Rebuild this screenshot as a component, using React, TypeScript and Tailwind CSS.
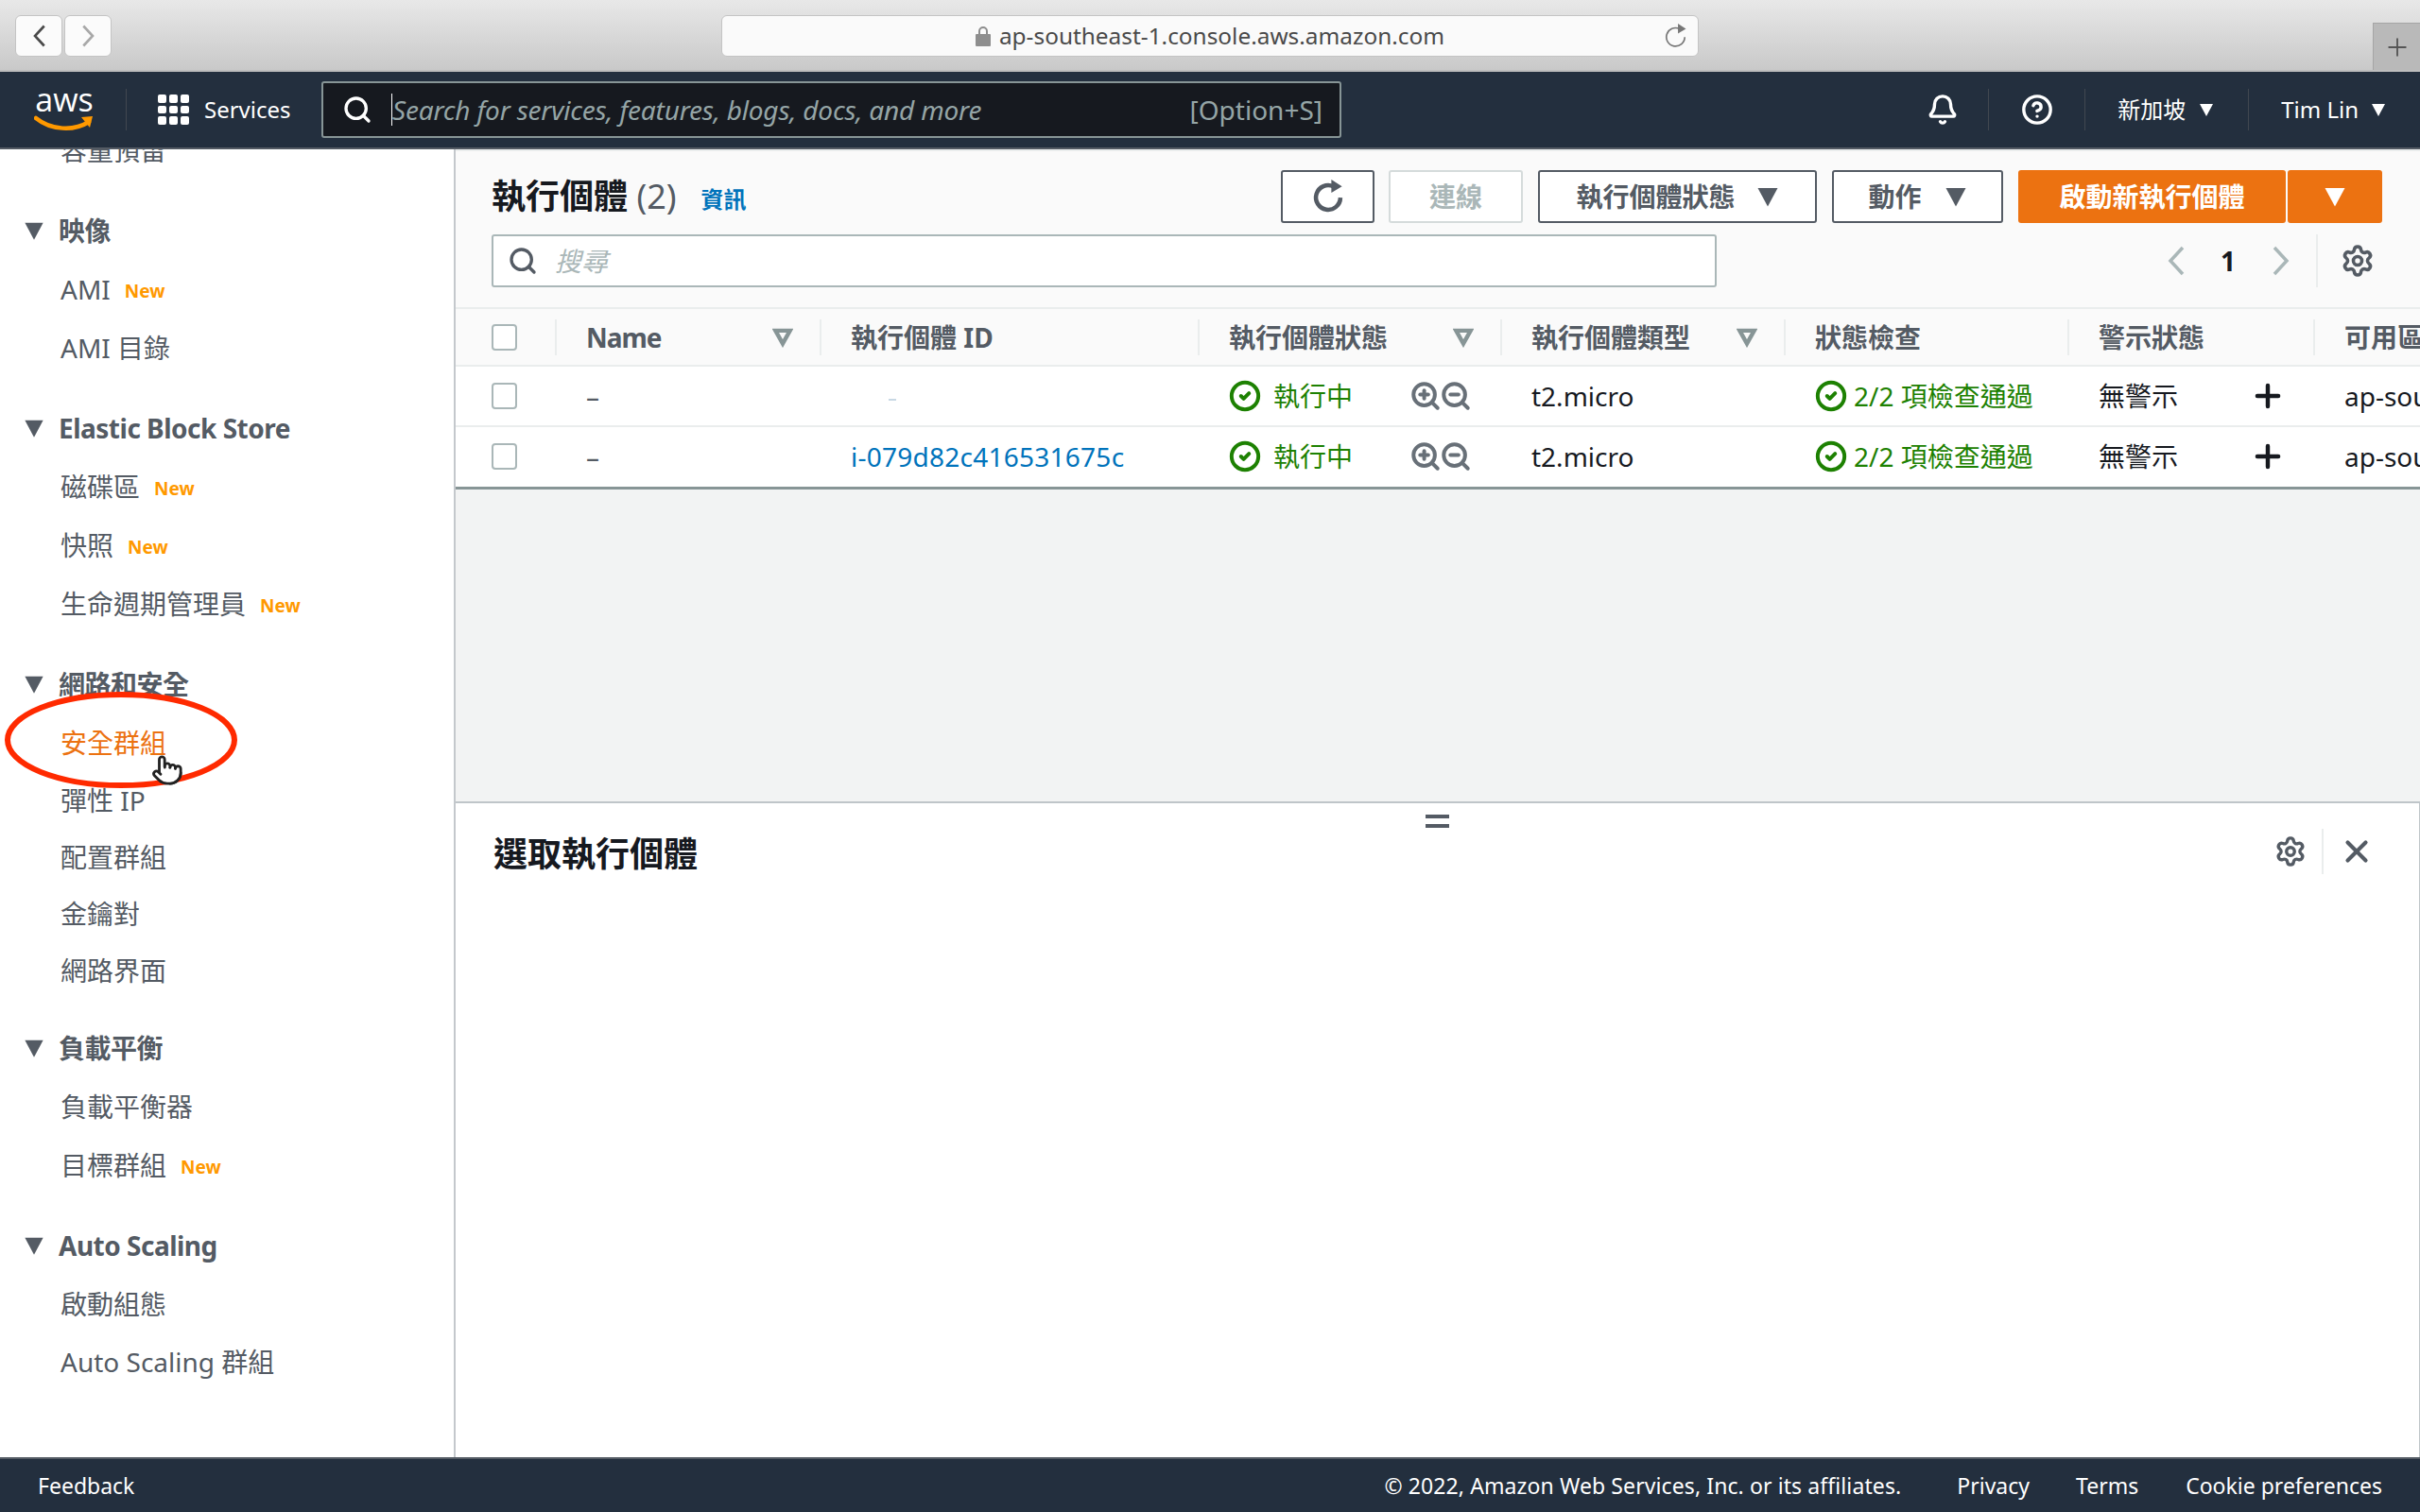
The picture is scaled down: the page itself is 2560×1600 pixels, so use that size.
import { Bell, CircleCheck, CircleHelp, Pointer, Plus, Search, Settings, X, ZoomIn, ZoomOut } from "lucide-react";

type NavGroup = {
  title: string;
  spacing: string;
  items: { label: string; isNew?: boolean; active?: boolean; short?: boolean }[];
};

const navGroups: NavGroup[] = [
  {
    title: "映像",
    spacing: "mt-[23px]",
    items: [{ label: "AMI", isNew: true }, { label: "AMI 目錄" }],
  },
  {
    title: "Elastic Block Store",
    spacing: "mt-[23px]",
    items: [
      { label: "磁碟區", isNew: true },
      { label: "快照", isNew: true },
      { label: "生命週期管理員", isNew: true },
    ],
  },
  {
    title: "網路和安全",
    spacing: "mt-[23px]",
    items: [
      { label: "安全群組", active: true },
      { label: "彈性 IP", short: true },
      { label: "配置群組", short: true },
      { label: "金鑰對", short: true },
      { label: "網路界面", short: true },
    ],
  },
  {
    title: "負載平衡",
    spacing: "mt-[21px]",
    items: [{ label: "負載平衡器" }, { label: "目標群組", isNew: true }],
  },
  {
    title: "Auto Scaling",
    spacing: "mt-[23px]",
    items: [{ label: "啟動組態" }, { label: "Auto Scaling 群組", short: true }],
  },
];

const instances = [
  { id: "" },
  { id: "i-079d82c416531675c" },
];

function Caret({ className }: { className: string }) {
  return (
    <svg viewBox="0 0 16 16" className={className} fill="currentColor">
      <path d="M1 2h14L8 15z" />
    </svg>
  );
}

function FilterCaret() {
  return (
    <svg viewBox="0 0 20 20" className="h-[22px] w-[22px] shrink-0 text-[#879596]" fill="none" stroke="currentColor" strokeWidth="4">
      <path d="M3 3.5h14L10 16z" />
    </svg>
  );
}

// tall thin chevron, the lucide ones are too wide here
function Chevron({ dir, className }: { dir: "left" | "right"; className: string }) {
  return (
    <svg viewBox="0 0 20 32" className={className} fill="none" stroke="currentColor" strokeWidth="3.5">
      <path d={dir === "left" ? "M17 2 4 16l13 14" : "M3 2l13 14L3 30"} />
    </svg>
  );
}

// open ring with a solid arrow head at the top right
function Reload({ className, strokeWidth }: { className: string; strokeWidth: number }) {
  return (
    <svg viewBox="0 0 32 32" className={className} fill="none">
      <path d="M21 6.5A11.5 11.5 0 1 0 27.5 17" stroke="currentColor" strokeWidth={strokeWidth} />
      <path d="M19 0l10 6.5-10 6z" fill="currentColor" />
    </svg>
  );
}

function OutlineButton({ children, className }: { children: React.ReactNode; className: string }) {
  return (
    <div className={`flex h-[56px] shrink-0 items-center justify-center rounded-[3px] border-2 border-[#545b64] bg-white font-bold text-[#545b64] ${className}`}>
      {children}
    </div>
  );
}

function HeaderCell({ label, filter, className }: { label: string; filter?: boolean; className: string }) {
  return (
    <div className={`flex h-[38px] shrink-0 items-center border-l-2 border-[#eaeded] ${className}`}>
      <span className="whitespace-nowrap">{label}</span>
      {filter && <span className="ml-auto pr-[28px]"><FilterCaret /></span>}
    </div>
  );
}

export default function App() {
  return (
    <div className="relative flex h-[1600px] w-[2560px] flex-col overflow-hidden bg-white font-['Noto_Sans','Noto_Sans_CJK_TC',sans-serif] text-[28px] text-[#16191f]">
      {/* browser chrome */}
      <div className="relative flex h-[76px] shrink-0 items-start border-b-2 border-[#bdbdbd] bg-gradient-to-b from-[#e8e8e8] to-[#c9c9c9] pl-[16px] pt-[16px]">
        <div className="flex h-[44px] w-[50px] items-center justify-center rounded-[6px] border border-[#c4c4c4] bg-[#fbfbfb] text-[#4a4a4a]">
          <Chevron dir="left" className="h-[24px] w-[15px]" />
        </div>
        <div className="ml-[2px] flex h-[44px] w-[50px] items-center justify-center rounded-[6px] border border-[#c4c4c4] bg-[#fbfbfb] text-[#a8a8a8]">
          <Chevron dir="right" className="h-[24px] w-[15px]" />
        </div>
        <div className="relative ml-[645px] flex h-[44px] w-[1034px] items-center justify-center rounded-[6px] border border-[#c4c4c4] bg-[#fafafa] text-[24.4px] text-[#4a4a4a]">
          <svg viewBox="0 0 16 22" className="mr-[9px] h-[22px] w-[16px] text-[#8e8e8e]" fill="currentColor">
            <path d="M3 9V6a5 5 0 0 1 10 0v3h-2V6a3 3 0 0 0-6 0v3z" />
            <rect y="9" width="16" height="13" rx="1" />
          </svg>
          <span>ap-southeast-1.console.aws.amazon.com</span>
          <Reload strokeWidth={2} className="absolute right-[10px] top-[8px] h-[27px] w-[27px] text-[#777]" />
        </div>
        <div className="absolute bottom-0 right-0 flex h-[50px] w-[50px] items-center justify-center border-l border-t border-[#a5a5a5] bg-[#b9b9b9] text-[#555]">
          <Plus size={30} strokeWidth={1.5} />
        </div>
      </div>

      {/* console nav */}
      <div className="flex h-[82px] shrink-0 items-center border-b-2 border-[#545b64] bg-[#232f3e] text-white">
        <div className="ml-[36px] flex h-[60px] w-[64px] flex-col items-center justify-center">
          <span className="h-[32px] font-['Open_Sans',sans-serif] text-[34px] leading-[30px]">aws</span>
          <svg viewBox="0 0 64 20" className="h-[20px] w-[64px]" fill="none">
            <path d="M2 3c16 13 40 14 56 4" stroke="#ff9900" strokeWidth="4.5" strokeLinecap="round" />
            <path d="M50 2l12-1-3 12z" fill="#ff9900" />
          </svg>
        </div>
        <div className="ml-[33px] h-[44px] w-px bg-[#414750]" />
        <div className="ml-[33px] grid h-[32px] w-[33px] grid-cols-3 gap-[3px]">
          {Array.from({ length: 9 }).map((_, i) => (
            <span key={i} className="rounded-[2px] bg-white" />
          ))}
        </div>
        <span className="ml-[16px] w-[90px] text-[24px]">Services</span>
        <div className="ml-[34px] flex h-[60px] w-[1079px] items-center rounded-[3px] border-2 border-[#879596] bg-[#16191f] pr-[18px] text-[#95a5a6]">
          <Search size={32} strokeWidth={2.5} className="ml-[20px] text-white" />
          <span className="ml-[20px] h-[34px] w-px bg-white" />
          <span className="whitespace-nowrap italic tracking-[-0.2px]">Search for services, features, blogs, docs, and more</span>
          <span className="ml-auto whitespace-nowrap">[Option+S]</span>
        </div>
        <div className="ml-auto flex items-center text-[24px]">
          <Bell size={34} strokeWidth={2.4} />
          <span className="ml-[31px] h-[44px] w-px bg-[#414750]" />
          <CircleHelp size={34} strokeWidth={2.4} className="ml-[34px]" />
          <span className="ml-[33px] h-[44px] w-px bg-[#414750]" />
          <span className="ml-[34px]">新加坡</span>
          <Caret className="ml-[14px] h-[16px] w-[16px]" />
          <span className="ml-[36px] h-[44px] w-px bg-[#414750]" />
          <span className="ml-[34px]">Tim Lin</span>
          <Caret className="ml-[13px] mr-[36px] h-[16px] w-[16px]" />
        </div>
      </div>

      <div className="flex min-h-0 flex-1">
        {/* sidebar */}
        <aside className="w-[482px] shrink-0 overflow-hidden border-r-2 border-[#c4c8cc] bg-white text-[#545b64]">
          <div className="-mt-[30px]">
            <div className="flex h-[62px] items-center pl-[64px]">容量預留</div>
            {navGroups.map((group) => (
              <div key={group.title} className={group.spacing}>
                <div className="flex h-[62px] items-center pl-[25px] font-bold tracking-[-0.5px]">
                  <Caret className="mr-[15px] h-[22px] w-[22px]" />
                  {group.title}
                </div>
                {group.items.map((item) => (
                  <div
                    key={item.label}
                    className={`flex items-center pl-[64px] ${item.short ? "h-[60px]" : "h-[62px]"} ${item.active ? "text-[#ec7211]" : ""}`}
                  >
                    {item.label}
                    {item.isNew && <span className="ml-[15px] mt-[4px] text-[19px] font-bold text-[#ff9900]">New</span>}
                  </div>
                ))}
              </div>
            ))}
          </div>
        </aside>

        <main className="flex min-w-0 flex-1 flex-col border-t-2 border-[#eaeded] bg-[#f2f3f3]">
          {/* toolbar */}
          <div className="h-[167px] shrink-0 border-b-2 border-[#eaeded] bg-[#fafafa] pl-[38px] pr-[40px] pt-[20px]">
            <div className="flex h-[56px] items-center">
              <h1 className="text-[36px] font-bold">
                執行個體 <span className="font-normal text-[#545b64]">(2)</span>
              </h1>
              <span className="ml-[26px] mt-[6px] text-[24px] font-bold text-[#0073bb]">資訊</span>
              <OutlineButton className="ml-auto w-[99px]">
                <Reload strokeWidth={4} className="h-[36px] w-[36px]" />
              </OutlineButton>
              <div className="ml-[15px] flex h-[56px] w-[142px] items-center justify-center rounded-[3px] border-2 border-[#d5dbdb] bg-white font-bold text-[#aab7b8]">連線</div>
              <OutlineButton className="ml-[16px] w-[295px]">
                執行個體狀態
                <Caret className="ml-[22px] h-[24px] w-[24px]" />
              </OutlineButton>
              <OutlineButton className="ml-[16px] w-[181px]">
                動作
                <Caret className="ml-[24px] h-[24px] w-[24px]" />
              </OutlineButton>
              <div className="ml-[16px] flex h-[56px] w-[283px] items-center justify-center rounded-[3px] bg-[#ec7211] font-bold text-white">啟動新執行個體</div>
              <div className="ml-[2px] flex h-[56px] w-[100px] items-center justify-center rounded-[3px] bg-[#ec7211] text-white">
                <Caret className="h-[24px] w-[24px]" />
              </div>
            </div>
            <div className="mt-[12px] flex h-[56px] items-center">
              <div className="flex h-[56px] w-[1296px] items-center rounded-[3px] border-2 border-[#aab7b8] bg-white text-[#aab7b8]">
                <Search size={32} strokeWidth={2.5} className="ml-[15px] text-[#545b64]" />
                <span className="ml-[18px] italic">搜尋</span>
              </div>
              <Chevron dir="left" className="ml-[476px] h-[32px] w-[20px] text-[#aab7b8]" />
              <span className="ml-[30px] w-[30px] text-center font-bold">1</span>
              <Chevron dir="right" className="ml-[31px] h-[32px] w-[20px] text-[#aab7b8]" />
              <span className="ml-[27px] h-[56px] w-[2px] bg-[#eaeded]" />
              <Settings size={36} strokeWidth={2.4} className="ml-[24px] text-[#545b64]" />
            </div>
          </div>

          {/* table */}
          <div className="flex h-[61px] shrink-0 items-center overflow-hidden border-b-2 border-[#eaeded] bg-[#fafafa] font-bold text-[#545b64]">
            <div className="flex w-[105px] shrink-0 items-center pl-[38px]">
              <span className="h-[28px] w-[27px] rounded-[4px] border-2 border-[#aab7b8] bg-white" />
            </div>
            <HeaderCell label="Name" filter className="w-[280px] pl-[31px] tracking-[-1px]" />
            <HeaderCell label="執行個體 ID" className="w-[400px] pl-[31px]" />
            <HeaderCell label="執行個體狀態" filter className="w-[320px] pl-[31px]" />
            <HeaderCell label="執行個體類型" filter className="w-[300px] pl-[31px]" />
            <HeaderCell label="狀態檢查" className="w-[300px] pl-[31px]" />
            <HeaderCell label="警示狀態" className="w-[260px] pl-[31px]" />
            <HeaderCell label="可用區域" className="w-[200px] pl-[31px]" />
          </div>
          {instances.map((row, i) => (
            <div
              key={i}
              className={`flex h-[64px] shrink-0 items-center overflow-hidden bg-white ${i === 0 ? "border-b-2 border-[#eaeded]" : "h-[66px] border-b-[3px] border-[#879596] pb-[2px]"}`}
            >
              <div className="flex w-[105px] shrink-0 items-center pl-[38px]">
                <span className="h-[28px] w-[27px] rounded-[4px] border-2 border-[#aab7b8] bg-white" />
              </div>
              <div className="w-[280px] shrink-0 pl-[33px] text-[#545b64]">–</div>
              <div className="w-[400px] shrink-0 pl-[33px] tracking-[0.25px] text-[#0073bb]">
                {row.id || <span className="ml-[40px] mt-[8px] block h-[2px] w-[8px] bg-[#c8d8e4]" />}
              </div>
              <div className="flex w-[320px] shrink-0 items-center pl-[33px] text-[#1d8102]">
                <CircleCheck size={34} strokeWidth={2.8} />
                <span className="ml-[13px]">執行中</span>
                <ZoomIn size={34} strokeWidth={2.8} className="ml-[60px] text-[#687078]" />
                <ZoomOut size={34} strokeWidth={2.8} className="-ml-[2px] text-[#687078]" />
              </div>
              <div className="w-[300px] shrink-0 pl-[33px]">t2.micro</div>
              <div className="flex w-[300px] shrink-0 items-center whitespace-nowrap pl-[33px] text-[#1d8102]">
                <CircleCheck size={34} strokeWidth={2.8} />
                <span className="ml-[7px]">2/2 項檢查通過</span>
              </div>
              <div className="flex w-[260px] shrink-0 items-center pl-[33px]">
                無警示
                <Plus size={38} strokeWidth={2.8} className="ml-[76px]" />
              </div>
              <div className="w-[200px] shrink-0 whitespace-nowrap pl-[33px]">ap-southeast-1a</div>
            </div>
          ))}
          <div className="flex-1" />

          {/* split panel */}
          <div className="relative h-[694px] shrink-0 border-r border-t-2 border-[#bfc5c9] bg-white">
            <div className="mx-auto mt-[12px] flex h-[14px] w-[25px] flex-col justify-between">
              <span className="h-[4px] bg-[#545b64]" />
              <span className="h-[4px] bg-[#545b64]" />
            </div>
            <div className="flex h-[48px] items-center pl-[40px] pr-[47px] pt-[2px]">
              <h2 className="mt-[6px] text-[36px] font-bold">選取執行個體</h2>
              <Settings size={34} strokeWidth={2.4} className="ml-auto text-[#545b64]" />
              <span className="ml-[16px] h-[48px] w-[2px] bg-[#eaeded]" />
              <X size={38} strokeWidth={2.6} className="ml-[16px] text-[#545b64]" />
            </div>
          </div>
        </main>
      </div>

      {/* footer */}
      <div className="flex h-[58px] shrink-0 items-center border-t-2 border-[#545b64] bg-[#232f3e] pl-[40px] pr-[40px] text-[23px] text-white">
        <span>Feedback</span>
        <span className="ml-auto tracking-[0.1px]">© 2022, Amazon Web Services, Inc. or its affiliates.</span>
        <span className="ml-[59px]">Privacy</span>
        <span className="ml-[49px]">Terms</span>
        <span className="ml-[50px]">Cookie preferences</span>
      </div>

      {/* red annotation and hand cursor from the screenshot */}
      <svg viewBox="0 0 260 110" className="absolute left-0 top-[728px] h-[110px] w-[260px]" fill="none">
        <ellipse cx="128" cy="55" rx="120" ry="48" stroke="#ff2a00" strokeWidth="6" />
      </svg>
      <Pointer size={34} strokeWidth={2} className="absolute left-[160px] top-[798px] fill-white text-[#222]" />
    </div>
  );
}
